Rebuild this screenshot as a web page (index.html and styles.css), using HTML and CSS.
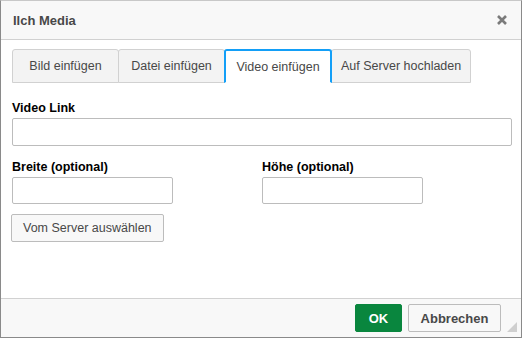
FILE: index.html
```html
<!DOCTYPE html>
<html lang="de">
<head>
  <meta charset="UTF-8" />
  <title>Ilch Media</title>
  <link rel="stylesheet" href="styles.css">
</head>
<body>
  <div class="dialog">
    <div class="dialog-title">
      <span>Ilch Media</span>
      <span class="close">
        <svg width="12" height="12" viewBox="0 0 12 12"><path d="M2 2L10 10M10 2L2 10" stroke="#7b7b7b" stroke-width="2.6"/></svg>
      </span>
    </div>

    <div class="tabs">
      <a class="tab">Bild einfügen</a>
      <a class="tab">Datei einfügen</a>
      <a class="tab selected">Video einfügen</a>
      <a class="tab">Auf Server hochladen</a>
    </div>

    <div class="dialog-body">
      <label class="field">
        <span class="label">Video Link</span>
        <input type="text" class="input wide" />
      </label>
      <div class="row">
        <label class="field half">
          <span class="label">Breite (optional)</span>
          <input type="text" class="input small" />
        </label>
        <label class="field half">
          <span class="label">Höhe (optional)</span>
          <input type="text" class="input small" />
        </label>
      </div>
      <button class="btn">Vom Server auswählen</button>
    </div>

    <div class="dialog-footer">
      <button class="btn btn-ok">OK</button>
      <button class="btn btn-cancel">Abbrechen</button>
      <span class="resizer"></span>
    </div>
  </div>
</body>
</html>
```

FILE: styles.css
```css
body {
  margin: 0;
  font-family: "Liberation Sans", Arial, sans-serif;
  font-size: 12.5px;
  background: #fff;
}
.dialog {
  position: relative;
  width: 522px;
  height: 338px;
  box-sizing: border-box;
  border: 1px solid #8a8a8a;
  border-top-color: #c8c8c8;
  display: flex;
  flex-direction: column;
  background: #fff;
}
.dialog-title {
  height: 38px;
  flex: none;
  background: #f8f8f8;
  border-bottom: 1px solid #d1d1d1;
  display: flex;
  align-items: center;
  justify-content: space-between;
  padding: 0 13px 0 12px;
  font-weight: bold;
  font-size: 13px;
  color: #484848;
}
.close {
  display: flex;
}
.tabs {
  display: flex;
  padding: 9px 0 0 11px;
  flex: none;
}
.tab {
  min-width: 87px;
  height: 32px;
  line-height: 33px;
  padding: 0 9px;
  text-align: center;
  border: 1px solid #d1d1d1;
  border-radius: 3px 3px 0 0;
  background: #f3f3f3;
  color: #484848;
  margin-left: -1px;
}
.tab:first-child {
  margin-left: 0;
}
.tab.selected {
  background: #fff;
  border: 2px solid #139ff7;
  border-bottom: 1px solid #fff;
  height: 31px;
  line-height: 32px;
  padding: 0 9px;
  min-width: 86px;
  position: relative;
}
.dialog-body {
  flex: 1;
  padding: 17px 8px 0 11px;
}
.field {
  display: flex;
  flex-direction: column;
}
.label {
  font-weight: bold;
  color: #000;
  line-height: 17px;
  margin-bottom: 1px;
}
.input {
  box-sizing: border-box;
  border: 1px solid #bcbcbc;
  border-radius: 2px;
  font: inherit;
  padding: 0 6px;
}
.wide {
  width: 500px;
  height: 28px;
}
.row {
  display: flex;
  margin-top: 13px;
}
.half {
  width: 250px;
}
.small {
  width: 161px;
  height: 27px;
}
.btn {
  box-sizing: border-box;
  height: 28px;
  padding: 0 11px;
  border: 1px solid #bcbcbc;
  border-radius: 2px;
  background: #f8f8f8;
  color: #484848;
  font: inherit;
  cursor: pointer;
}
.dialog-body .btn {
  margin-top: 10px;
  margin-left: -1px;
}
.dialog-footer {
  flex: none;
  box-sizing: border-box;
  height: 39px;
  background: #f8f8f8;
  border-top: 1px solid #d1d1d1;
  display: flex;
  justify-content: flex-end;
  align-items: flex-start;
  gap: 6px;
  padding: 5px 20px 0 0;
}
.btn-ok {
  width: 47px;
  background: #09863e;
  border-color: #09863e;
  color: #fff;
  font-weight: bold;
  font-size: 13px;
}
.btn-cancel {
  width: 93px;
  font-weight: bold;
  font-size: 13px;
}
.resizer {
  position: absolute;
  right: 4px;
  bottom: 5px;
  width: 0;
  height: 0;
  border-left: 10px solid transparent;
  border-bottom: 10px solid #cfcfcf;
}
```
